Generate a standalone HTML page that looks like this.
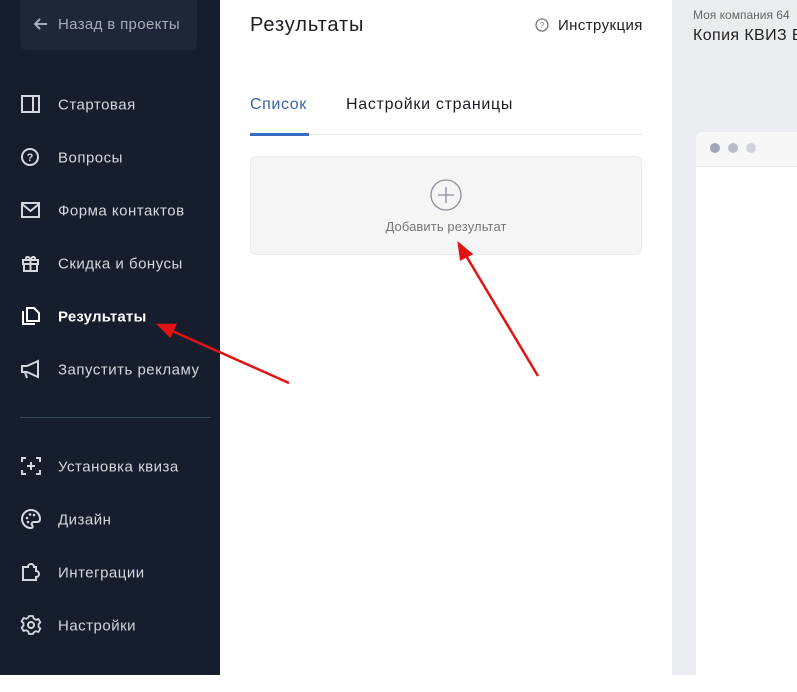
<!DOCTYPE html>
<html><head><meta charset="utf-8"><style>
*{margin:0;padding:0;box-sizing:border-box}
body{width:797px;height:675px;overflow:hidden;position:relative;background:#fff;font-family:"Liberation Sans","Noto Sans CJK JP",sans-serif}
.sb{position:absolute;left:0;top:0;width:220px;height:675px;background:#161d2d}
.back{position:absolute;left:20px;top:-6px;width:177px;height:56px;background:#1e2637;border-radius:6px;color:#a7adb8;font-size:15px;line-height:62px;padding-left:38px;letter-spacing:0.35px}
.back svg{position:absolute;left:14px;top:24px}
.it{position:absolute;left:58px;color:#d4d7dd;font-size:15px;letter-spacing:0.5px;transform:translateY(-45%)}
.ic{position:absolute;left:20px;width:22px;height:22px;transform:translateY(-50%)}
.main{position:absolute;left:220px;top:0;width:452px;height:675px;background:#fff}
.rp{position:absolute;left:672px;top:0;width:125px;height:675px;background:#ebecef}
</style></head><body>
<div class="sb">
<div class="back"><svg width="14" height="12" viewBox="0 0 14 12"><path d="M13 6H2M6 1L1 6l5 5" stroke="#a7adb8" stroke-width="2" fill="none"/></svg>Назад в проекты</div>
<svg class="ic" style="top:104px" viewBox="0 0 22 22"><rect x="2" y="3" width="17" height="16" fill="none" stroke="#d4d7dd" stroke-width="2"/><path d="M13 3v16" stroke="#d4d7dd" stroke-width="2"/></svg>
<div class="it" style="top:104px">Стартовая</div>
<svg class="ic" style="top:157px" viewBox="0 0 22 22"><circle cx="10" cy="11" r="8" fill="none" stroke="#d4d7dd" stroke-width="2"/><text x="10" y="15" font-size="11" font-weight="bold" fill="#d4d7dd" text-anchor="middle" font-family="Liberation Sans">?</text></svg>
<div class="it" style="top:157px">Вопросы</div>
<svg class="ic" style="top:210px" viewBox="0 0 22 22"><rect x="2" y="4" width="17" height="14" fill="none" stroke="#d4d7dd" stroke-width="2"/><path d="M2 5l8.5 7L19 5" stroke="#d4d7dd" stroke-width="2" fill="none"/></svg>
<div class="it" style="top:210px">Форма контактов</div>
<svg class="ic" style="top:263px" viewBox="0 0 22 22"><rect x="3" y="8" width="15" height="4" fill="none" stroke="#d4d7dd" stroke-width="2"/><rect x="4" y="12" width="13" height="7" fill="none" stroke="#d4d7dd" stroke-width="2"/><path d="M10.5 8v11M10.5 8c-2-5-6-3-4 0M10.5 8c2-5 6-3 4 0" stroke="#d4d7dd" stroke-width="2" fill="none"/></svg>
<div class="it" style="top:263px">Скидка и бонусы</div>
<svg class="ic" style="top:316px" viewBox="0 0 22 22"><path d="M3 6v13h12" stroke="#fff" stroke-width="2" fill="none"/><path d="M7 3h7l5 5v8H7z" stroke="#fff" stroke-width="2" fill="none"/></svg>
<div class="it" style="top:316px;color:#fff;font-weight:bold;letter-spacing:0.2px">Результаты</div>
<svg class="ic" style="top:369px" viewBox="0 0 22 22"><path d="M2 8h5l11-5v16L7 14H2zM5 14l2 6" stroke="#d4d7dd" stroke-width="2" fill="none"/></svg>
<div class="it" style="top:369px">Запустить рекламу</div>
<div style="position:absolute;left:20px;top:417px;width:191px;height:1px;background:#34465a"></div>
<svg class="ic" style="top:466px" viewBox="0 0 22 22"><path d="M2 7V3h4M16 3h4v4M20 15v4h-4M6 19H2v-4M11 7v8M7 11h8" stroke="#d4d7dd" stroke-width="2" fill="none"/></svg>
<div class="it" style="top:466px">Установка квиза</div>
<svg class="ic" style="top:519px" viewBox="0 0 22 22"><path d="M11 2a9 9 0 1 0 0 18c2 0 2-2 1-3s0-3 2-3h3c2 0 3-1 3-3C20 6 16 2 11 2z" stroke="#d4d7dd" stroke-width="2" fill="none"/><circle cx="7" cy="10" r="1.3" fill="#d4d7dd"/><circle cx="10" cy="6.5" r="1.3" fill="#d4d7dd"/><circle cx="14" cy="7" r="1.3" fill="#d4d7dd"/><circle cx="8" cy="14" r="1.3" fill="#d4d7dd"/></svg>
<div class="it" style="top:519px">Дизайн</div>
<svg class="ic" style="top:572px" viewBox="0 0 22 22"><path d="M3 19V6h5a3 3 0 0 1 6 0h2v4a3 3 0 0 1 0 6v3z" stroke="#d4d7dd" stroke-width="2" fill="none"/></svg>
<div class="it" style="top:572px">Интеграции</div>
<svg class="ic" style="top:625px" viewBox="0 0 22 22"><circle cx="11" cy="11" r="3" stroke="#d4d7dd" stroke-width="2" fill="none"/><path d="M9 2h4l.6 2.5 2.3 1.3 2.5-.8 2 3.4-1.9 1.8v2.6l1.9 1.8-2 3.4-2.5-.8-2.3 1.3L13 20H9l-.6-2.5-2.3-1.3-2.5.8-2-3.4 1.9-1.8V9.2L1.6 7.4l2-3.4 2.5.8 2.3-1.3z" stroke="#d4d7dd" stroke-width="1.8" fill="none" stroke-linejoin="round"/></svg>
<div class="it" style="top:625px">Настройки</div>
</div>
<div class="main">
<div style="position:absolute;left:30px;top:14px;font-size:20px;color:#1a1d24;letter-spacing:0.9px">Результаты</div>
<svg style="position:absolute;left:315px;top:18px" width="14" height="14" viewBox="0 0 14 14"><circle cx="7" cy="7" r="6" stroke="#777" stroke-width="1.3" fill="none"/><text x="7" y="10" font-size="8" fill="#777" text-anchor="middle" font-family="Liberation Sans">?</text></svg>
<div style="position:absolute;left:338px;top:17px;font-size:15px;color:#1a1d24;letter-spacing:0.4px">Инструкция</div>
<div style="position:absolute;left:30px;top:96px;font-size:16px;color:#3a62ad;letter-spacing:0.6px">Список</div>
<div style="position:absolute;left:126px;top:96px;font-size:16px;color:#1a1d24;letter-spacing:0.7px">Настройки страницы</div>
<div style="position:absolute;left:30px;top:134px;width:392px;height:1px;background:#e3e5e9"></div>
<div style="position:absolute;left:30px;top:133px;width:59px;height:3px;background:#3a6cc4"></div>
<div style="position:absolute;left:30px;top:156px;width:392px;height:99px;background:#f5f5f6;border:1px solid #eceded;border-radius:6px"></div>
<svg style="position:absolute;left:210px;top:179px" width="32" height="32" viewBox="0 0 32 32"><circle cx="16" cy="16" r="15" stroke="#8a8f9a" stroke-width="1.3" fill="none"/><path d="M16 8v16M8 16h16" stroke="#8a8f9a" stroke-width="1.3"/></svg>
<div style="position:absolute;left:30px;width:392px;text-align:center;top:219px;font-size:13px;color:#777;letter-spacing:0.1px">Добавить результат</div>
</div>
<div class="rp">
<div style="position:absolute;left:21px;top:8px;font-size:12px;color:#666;white-space:nowrap">Моя компания 64</div>
<div style="position:absolute;left:21px;top:27px;font-size:16px;color:#222;white-space:nowrap;letter-spacing:0.4px">Копия КВИЗ В</div>
<div style="position:absolute;left:24px;top:132px;width:110px;height:560px;background:#fff;border-radius:6px 0 0 0"></div>
<div style="position:absolute;left:24px;top:132px;width:110px;height:35px;background:#f7f7f8;border-bottom:1px solid #e5e6e9;border-radius:6px 0 0 0"></div>
<div style="position:absolute;left:38px;top:143px;width:10px;height:10px;border-radius:50%;background:#9ea6b9"></div>
<div style="position:absolute;left:56px;top:143px;width:10px;height:10px;border-radius:50%;background:#b7bcc6"></div>
<div style="position:absolute;left:74px;top:143px;width:10px;height:10px;border-radius:50%;background:#cfd2d8"></div>
</div>
<svg style="position:absolute;left:0;top:0" width="797" height="675"><g stroke="#e01414" stroke-width="2.5" fill="#e01414"><path d="M289 383L170 330"/><path d="M159 325l16 0-5 11z"/><path d="M538 376L465 254"/><path d="M459 244l12 10-10 5z"/></g></svg>
</body></html>
